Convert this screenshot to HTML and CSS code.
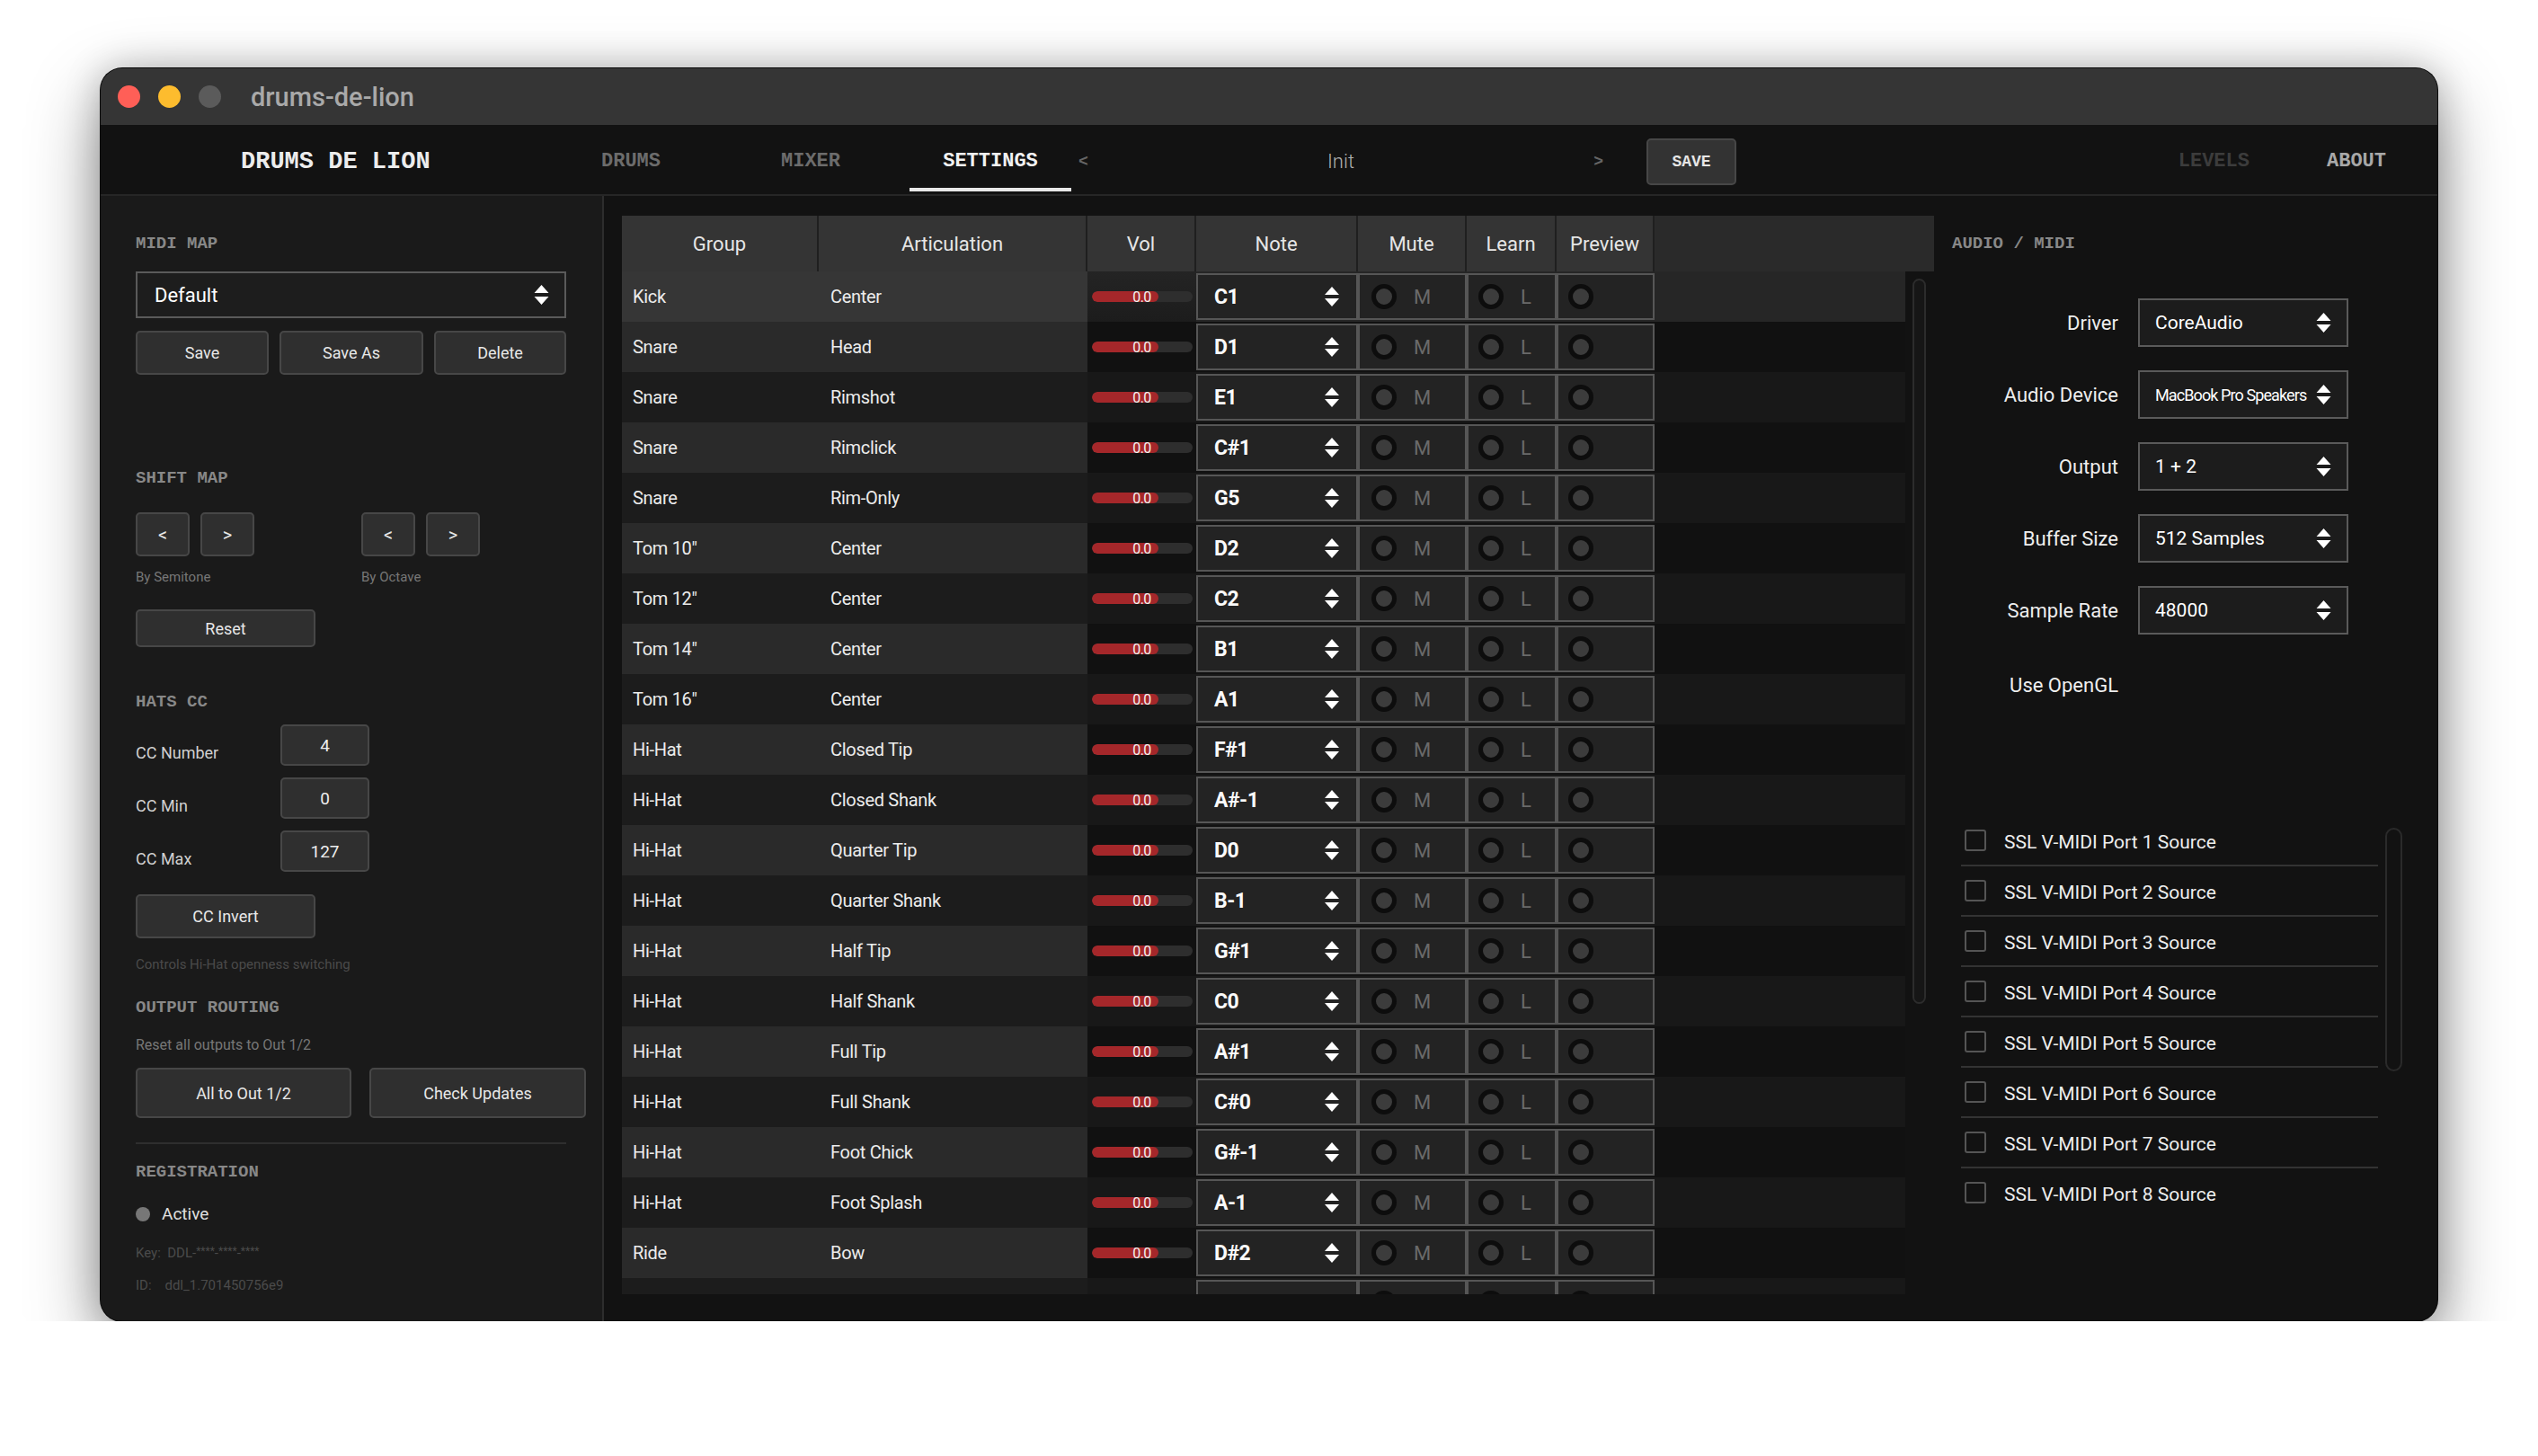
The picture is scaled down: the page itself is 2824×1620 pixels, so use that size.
FILE: index.html
```html
<!DOCTYPE html>
<html lang="en">
<head>
    <meta charset="UTF-8">
    <meta name="viewport" content="width=device-width, initial-scale=1.0">
    <title>drums-de-lion</title>
    <link rel="stylesheet" href="styles.css">
</head>
<body>
<div class="window">
    <div class="titlebar">
        <span class="light red"></span>
        <span class="light yellow"></span>
        <span class="light gray"></span>
        <span class="title">drums-de-lion</span>
    </div>

    <nav class="nav">
        <div class="logo">DRUMS DE LION</div>
        <div class="tabs">
            <div class="tab">DRUMS</div>
            <div class="tab">MIXER</div>
            <div class="tab active">SETTINGS</div>
        </div>
        <div class="preset">
            <span class="preset-arrow">&lt;</span>
            <span class="preset-name">Init</span>
            <span class="preset-arrow">&gt;</span>
        </div>
        <button class="save-btn">SAVE</button>
        <div class="nav-right">
            <span class="nav-link dim">LEVELS</span>
            <span class="nav-link">ABOUT</span>
        </div>
    </nav>

    <div class="main">
        <aside class="sidebar">
            <div class="heading">MIDI MAP</div>
            <div class="select map-select">
                <span>Default</span>
                <svg class="updown" viewBox="0 0 16 24" width="17" height="24"><path d="M8 1 L16 10 H0 Z M8 23 L16 14 H0 Z" fill="#fff"/></svg>
            </div>
            <div class="map-buttons">
                <button class="btn">Save</button>
                <button class="btn">Save As</button>
                <button class="btn">Delete</button>
            </div>

            <div class="heading shift-heading">SHIFT MAP</div>
            <div class="shift">
                <div>
                    <div class="shift-buttons">
                        <button class="btn square">&lt;</button>
                        <button class="btn square">&gt;</button>
                    </div>
                    <div class="caption">By Semitone</div>
                </div>
                <div>
                    <div class="shift-buttons">
                        <button class="btn square">&lt;</button>
                        <button class="btn square">&gt;</button>
                    </div>
                    <div class="caption">By Octave</div>
                </div>
            </div>
            <button class="btn wide reset">Reset</button>

            <div class="heading hats-heading">HATS CC</div>
            <div class="cc-list">
                <div class="cc-row"><span class="cc-label">CC Number</span><span class="cc-box">4</span></div>
                <div class="cc-row"><span class="cc-label">CC Min</span><span class="cc-box">0</span></div>
                <div class="cc-row"><span class="cc-label">CC Max</span><span class="cc-box">127</span></div>
            </div>
            <button class="btn wide invert">CC Invert</button>
            <div class="hint">Controls Hi-Hat openness switching</div>

            <div class="heading routing-heading">OUTPUT ROUTING</div>
            <div class="sub">Reset all outputs to Out 1/2</div>
            <div class="routing-buttons">
                <button class="btn tall">All to Out 1/2</button>
                <button class="btn tall">Check Updates</button>
            </div>
            <div class="divider"></div>

            <div class="heading reg-heading">REGISTRATION</div>
            <div class="status"><span class="dot"></span>Active</div>
            <div class="meta key">Key:  DDL-<sup>****</sup>-<sup>****</sup>-<sup>****</sup></div>
            <div class="meta id">ID:    ddl_1.701450756e9</div>
        </aside>

        <section class="mapping">
            <div class="table-head">
                <div class="th">Group</div>
                <div class="th">Articulation</div>
                <div class="th">Vol</div>
                <div class="th">Note</div>
                <div class="th">Mute</div>
                <div class="th">Learn</div>
                <div class="th">Preview</div>
                <div class="th-rest"></div>
            </div>
            <div class="table-body">
                <div class="rows" id="rows"></div>
                <div class="scroll-col"><div class="thumb"></div></div>
            </div>
        </section>

        <aside class="audio">
            <div class="heading">AUDIO / MIDI</div>
            <div class="audio-form">
                <span class="form-label">Driver</span>
                <div class="select audio-select"><span>CoreAudio</span><svg class="updown" viewBox="0 0 16 24" width="17" height="24"><path d="M8 1 L16 10 H0 Z M8 23 L16 14 H0 Z" fill="#fff"/></svg></div>
                <span class="form-label">Audio Device</span>
                <div class="select audio-select"><span class="narrow">MacBook Pro Speakers</span><svg class="updown" viewBox="0 0 16 24" width="17" height="24"><path d="M8 1 L16 10 H0 Z M8 23 L16 14 H0 Z" fill="#fff"/></svg></div>
                <span class="form-label">Output</span>
                <div class="select audio-select"><span>1 + 2</span><svg class="updown" viewBox="0 0 16 24" width="17" height="24"><path d="M8 1 L16 10 H0 Z M8 23 L16 14 H0 Z" fill="#fff"/></svg></div>
                <span class="form-label">Buffer Size</span>
                <div class="select audio-select"><span>512 Samples</span><svg class="updown" viewBox="0 0 16 24" width="17" height="24"><path d="M8 1 L16 10 H0 Z M8 23 L16 14 H0 Z" fill="#fff"/></svg></div>
                <span class="form-label">Sample Rate</span>
                <div class="select audio-select"><span>48000</span><svg class="updown" viewBox="0 0 16 24" width="17" height="24"><path d="M8 1 L16 10 H0 Z M8 23 L16 14 H0 Z" fill="#fff"/></svg></div>
                <span class="form-label opengl">Use OpenGL</span>
                <span></span>
            </div>

            <div class="ports-wrap">
                <ul class="ports">
                    <li class="port"><span class="check"></span>SSL V-MIDI Port 1 Source</li>
                    <li class="port"><span class="check"></span>SSL V-MIDI Port 2 Source</li>
                    <li class="port"><span class="check"></span>SSL V-MIDI Port 3 Source</li>
                    <li class="port"><span class="check"></span>SSL V-MIDI Port 4 Source</li>
                    <li class="port"><span class="check"></span>SSL V-MIDI Port 5 Source</li>
                    <li class="port"><span class="check"></span>SSL V-MIDI Port 6 Source</li>
                    <li class="port"><span class="check"></span>SSL V-MIDI Port 7 Source</li>
                    <li class="port"><span class="check"></span>SSL V-MIDI Port 8 Source</li>
                </ul>
                <div class="ports-thumb"></div>
            </div>
        </aside>
    </div>
</div>

<script>
    const mapping = [
        ['Kick', 'Center', 'C1'],
        ['Snare', 'Head', 'D1'],
        ['Snare', 'Rimshot', 'E1'],
        ['Snare', 'Rimclick', 'C#1'],
        ['Snare', 'Rim-Only', 'G5'],
        ['Tom 10"', 'Center', 'D2'],
        ['Tom 12"', 'Center', 'C2'],
        ['Tom 14"', 'Center', 'B1'],
        ['Tom 16"', 'Center', 'A1'],
        ['Hi-Hat', 'Closed Tip', 'F#1'],
        ['Hi-Hat', 'Closed Shank', 'A#-1'],
        ['Hi-Hat', 'Quarter Tip', 'D0'],
        ['Hi-Hat', 'Quarter Shank', 'B-1'],
        ['Hi-Hat', 'Half Tip', 'G#1'],
        ['Hi-Hat', 'Half Shank', 'C0'],
        ['Hi-Hat', 'Full Tip', 'A#1'],
        ['Hi-Hat', 'Full Shank', 'C#0'],
        ['Hi-Hat', 'Foot Chick', 'G#-1'],
        ['Hi-Hat', 'Foot Splash', 'A-1'],
        ['Ride', 'Bow', 'D#2'],
        // next row only peeks in at the bottom edge, its labels are scrolled out of view
        ['', '', '']
    ];

    const arrows = '<svg class="updown" viewBox="0 0 16 24" width="16" height="24"><path d="M8 1 L16 10 H0 Z M8 23 L16 14 H0 Z" fill="#fff"/></svg>';
    const rowsEl = document.getElementById('rows');

    mapping.forEach(([group, articulation, note], i) => {
        const peek = note === '';
        const row = document.createElement('div');
        row.className = 'row' + (i % 2 ? ' odd' : '') + (i === 0 ? ' selected' : '');
        row.innerHTML = `
            <div class="cell">${group}</div>
            <div class="cell">${articulation}</div>
            <div class="vol">${peek ? '' : '<div class="slider"><div class="track"><div class="fill"></div></div><span class="vol-value">0.0</span></div>'}</div>
            <div class="box note"><span>${note}</span>${peek ? '' : arrows}</div>
            <div class="box mute"><span class="radio"></span>${peek ? '' : '<span class="flag">M</span>'}</div>
            <div class="box learn"><span class="radio"></span>${peek ? '' : '<span class="flag">L</span>'}</div>
            <div class="box preview"><span class="radio"></span></div>
            <div></div>`;
        rowsEl.appendChild(row);
    });
</script>
</body>
</html>
```

FILE: styles.css
```css
body {
    margin: 0;
    padding: 76px 112px 0;
    background-color: #ffffff;
    font-family: Roboto, 'Liberation Sans', sans-serif;
    color: #e6e6e6;
}
button {
    font-family: Roboto, 'Liberation Sans', sans-serif;
}
.window {
    width: 2600px;
    height: 1394px;
    border-radius: 24px;
    overflow: hidden;
    background-color: #121212;
    box-shadow: 0 0 0 1px #0a0a0a, 0 30px 80px rgba(0, 0, 0, 0.42), 0 0 40px rgba(0, 0, 0, 0.22);
    display: flex;
    flex-direction: column;
}

/* title bar */
.titlebar {
    height: 63px;
    flex: none;
    background-color: #353535;
    display: flex;
    align-items: center;
    gap: 20px;
    padding-left: 19px;
}
.light {
    width: 25px;
    height: 25px;
    border-radius: 50%;
}
.red { background-color: #ff5f57; }
.yellow { background-color: #fdbc2e; }
.gray { background-color: #5b5b5b; }
.title {
    margin-left: 13px;
    font-size: 29px;
    font-weight: 500;
    color: #a9a9a9;
}

/* nav */
.nav {
    height: 79px;
    flex: none;
    box-sizing: border-box;
    background-color: #121212;
    border-bottom: 2px solid #262626;
    display: flex;
    align-items: center;
}
.logo {
    width: 500px;
    box-sizing: border-box;
    padding: 4px 0 0 156px;
    font-family: 'Liberation Mono', monospace;
    font-weight: bold;
    font-size: 27px;
    color: #ececec;
}
.tabs {
    display: flex;
    gap: 20px;
    align-self: stretch;
}
.tab {
    width: 180px;
    box-sizing: border-box;
    display: flex;
    align-items: center;
    justify-content: center;
    padding-top: 11px;
    margin-bottom: 3px;
    border-bottom: 4px solid transparent;
    font-family: 'Liberation Mono', monospace;
    font-weight: bold;
    font-size: 22px;
    color: #6c6c6c;
}
.tab.active {
    color: #f2f2f2;
    border-bottom-color: #e8e8e8;
}
.preset {
    width: 600px;
    box-sizing: border-box;
    padding: 4px 8px 0;
    display: flex;
    justify-content: space-between;
    align-items: center;
}
.preset-arrow {
    font-family: 'Liberation Mono', monospace;
    font-weight: bold;
    font-size: 18px;
    color: #666;
}
.preset-name {
    font-size: 22px;
    font-weight: 300;
    color: #b0b0b0;
}
.save-btn {
    margin: 4px 0 0 40px;
    width: 100px;
    height: 52px;
    background-color: #333;
    border: 2px solid #474747;
    border-radius: 5px;
    color: #e6e6e6;
    font-family: 'Liberation Mono', monospace;
    font-weight: bold;
    font-size: 18px;
}
.nav-right {
    margin-left: auto;
    padding: 4px 57px 0 0;
    display: flex;
    gap: 86px;
}
.nav-link {
    font-family: 'Liberation Mono', monospace;
    font-weight: bold;
    font-size: 22px;
    color: #a8a8a8;
}
.nav-link.dim {
    color: #3c3c3c;
}

/* layout */
.main {
    flex: 1;
    display: flex;
    min-height: 0;
}
.heading {
    font-family: 'Liberation Mono', monospace;
    font-weight: bold;
    font-size: 19px;
    line-height: 22px;
    color: #888;
}

/* left panel */
.sidebar {
    width: 560px;
    flex: none;
    box-sizing: border-box;
    padding: 42px 0 0 39px;
    background-color: #1a1a1a;
    border-right: 2px solid #2d2d2d;
}
.select {
    box-sizing: border-box;
    border: 2px solid #5a5a5a;
    background-color: #1d1d1d;
    display: flex;
    align-items: center;
    justify-content: space-between;
    color: #fff;
}
.map-select {
    margin-top: 20px;
    width: 479px;
    height: 52px;
    padding: 0 17px 0 19px;
    font-size: 22px;
}
.btn {
    display: block;
    box-sizing: border-box;
    background-color: #2f2f2f;
    border: 2px solid #474747;
    border-radius: 5px;
    color: #e8e8e8;
    font-size: 18px;
    padding: 0;
}
.map-buttons {
    margin-top: 14px;
    display: grid;
    grid-template-columns: 148px 160px 147px;
    gap: 12px;
}
.map-buttons .btn {
    height: 49px;
}
.shift-heading {
    margin-top: 104px;
}
.shift {
    margin-top: 27px;
    display: grid;
    grid-template-columns: 251px auto;
}
.shift-buttons {
    display: flex;
    gap: 12px;
}
.btn.square {
    width: 60px;
    height: 49px;
    font-size: 20px;
}
.caption {
    margin-top: 14px;
    font-size: 15px;
    line-height: 18px;
    color: #777;
}
.btn.wide {
    width: 200px;
}
.reset {
    margin-top: 27px;
    height: 42px;
}
.hats-heading {
    margin-top: 50px;
}
.cc-list {
    margin-top: 14px;
    display: flex;
    flex-direction: column;
    gap: 13px;
}
.cc-row {
    display: flex;
    align-items: flex-end;
}
.cc-label {
    width: 161px;
    font-size: 18px;
    line-height: 22px;
    margin-bottom: 3px;
    color: #d0d0d0;
}
.cc-box {
    width: 99px;
    height: 46px;
    box-sizing: border-box;
    background-color: #2f2f2f;
    border: 2px solid #474747;
    border-radius: 5px;
    display: flex;
    align-items: center;
    justify-content: center;
    font-size: 19px;
    color: #eee;
}
.invert {
    margin-top: 25px;
    height: 49px;
}
.hint {
    margin-top: 21px;
    font-size: 15px;
    line-height: 17px;
    color: #4a4a4a;
}
.routing-heading {
    margin-top: 28px;
}
.sub {
    margin-top: 21px;
    font-size: 16px;
    line-height: 20px;
    color: #777;
}
.routing-buttons {
    margin-top: 15px;
    display: grid;
    grid-template-columns: 240px 241px;
    gap: 20px;
}
.btn.tall {
    height: 56px;
}
.divider {
    margin-top: 27px;
    width: 479px;
    height: 2px;
    background-color: #2e2e2e;
}
.reg-heading {
    margin-top: 20px;
}
.status {
    margin-top: 25px;
    display: flex;
    align-items: center;
    gap: 13px;
    font-size: 19px;
    line-height: 22px;
    color: #e0e0e0;
}
.dot {
    width: 16px;
    height: 16px;
    border-radius: 50%;
    background-color: #777;
}
.meta {
    font-size: 15px;
    line-height: 18px;
    color: #4b4b4b;
    white-space: pre;
}
.meta sup {
    font-size: 12px;
    vertical-align: 3px;
}
.key {
    margin-top: 21px;
}
.id {
    margin-top: 18px;
}

/* mapping table */
.mapping {
    flex: 1;
    box-sizing: border-box;
    padding: 22px 0 0 20px;
    display: flex;
    flex-direction: column;
    min-width: 0;
}
.table-head {
    width: 1460px;
    height: 62px;
    flex: none;
    display: grid;
    grid-template-columns: 219px 299px 121px 180px 121px 100px 109px 1fr;
    background-color: #2a2a2a;
}
.th {
    background-color: #343434;
    border-right: 2px solid #1f1f1f;
    display: flex;
    align-items: center;
    justify-content: center;
    font-size: 22px;
    color: #e6e6e6;
}
.table-body {
    width: 1460px;
    height: 1138px;
    overflow: hidden;
    display: flex;
}
.rows {
    width: 1428px;
    flex: none;
}
.row {
    height: 56px;
    display: grid;
    grid-template-columns: 219px 299px 121px 180px 121px 100px 109px 1fr;
    background-color: #181818;
}
.row.odd {
    background-color: #111111;
}
.cell {
    display: flex;
    align-items: center;
    padding-left: 12px;
    background-color: #1c1c1c;
    font-size: 20px;
    letter-spacing: -0.3px;
    color: #ececec;
}
.cell + .cell {
    padding-left: 13px;
}
.row.odd .cell {
    background-color: #2a2a2a;
}
.row.selected {
    background-color: #262626;
}
.row.selected .cell {
    background-color: #363636;
}
.row.selected .vol {
    background: linear-gradient(to bottom, #242424, #1c1c1c);
}
.vol {
    display: flex;
    align-items: center;
    justify-content: center;
}
.slider {
    display: grid;
    align-items: center;
}
.track,
.vol-value {
    grid-area: 1 / 1;
}
.track {
    width: 112px;
    height: 12px;
    border-radius: 6px;
    background-color: #2e2e2e;
    overflow: hidden;
}
.fill {
    width: 74px;
    height: 100%;
    border-radius: 6px;
    background-color: #a5272a;
}
.vol-value {
    justify-self: center;
    font-size: 16px;
    letter-spacing: -0.5px;
    color: #f2f2f2;
}
.box {
    margin: 2px 0;
    box-sizing: border-box;
    border: 2px solid #565656;
    background-color: #232323;
    display: flex;
    align-items: center;
}
.note {
    justify-content: space-between;
    padding: 0 19px 0 18px;
    font-size: 23px;
    font-weight: bold;
    letter-spacing: -0.5px;
    color: #fafafa;
}
.radio {
    width: 28px;
    height: 28px;
    box-sizing: border-box;
    border-radius: 50%;
    border: 5px solid #0d0d0d;
    background-color: #3c3c3c;
    flex: none;
}
.mute .radio {
    margin-left: 13px;
}
.learn .radio,
.preview .radio {
    margin-left: 11px;
}
.flag {
    margin-left: 19px;
    font-size: 22px;
    color: #6a6a6a;
}
.scroll-col {
    width: 32px;
    flex: none;
}
.thumb {
    margin: 8px 0 0 8px;
    width: 15px;
    height: 807px;
    box-sizing: border-box;
    border: 2px solid #2c2c2c;
    border-radius: 8px;
    background-color: #161616;
}

/* right panel */
.audio {
    width: 560px;
    flex: none;
    box-sizing: border-box;
    padding: 42px 0 0 20px;
}
.audio-form {
    margin-top: 50px;
    display: grid;
    grid-template-columns: 185px 234px;
    column-gap: 22px;
    row-gap: 26px;
    align-items: center;
}
.form-label {
    text-align: right;
    font-size: 22px;
    color: #eeeeee;
}
.form-label.opengl {
    height: 54px;
    line-height: 54px;
    margin-top: 4px;
}
.audio-select {
    height: 54px;
    padding: 0 17px 0 17px;
    font-size: 21px;
    background-color: #1c1c1c;
}
.narrow {
    font-size: 18px;
    letter-spacing: -0.9px;
}
.ports-wrap {
    margin-top: 118px;
    margin-left: 10px;
    display: flex;
}
.ports {
    list-style: none;
    margin: 0;
    padding: 0;
    width: 464px;
}
.port {
    height: 56px;
    box-sizing: border-box;
    padding-top: 3px;
    border-bottom: 2px solid #333;
    display: flex;
    align-items: center;
    font-size: 21px;
    color: #eeeeee;
}
.port:last-child {
    border-bottom-color: transparent;
}
.check {
    width: 24px;
    height: 24px;
    box-sizing: border-box;
    margin: 0 20px 4px 4px;
    border: 2px solid #555;
    border-radius: 3px;
}
.ports-thumb {
    margin: 13px 0 0 8px;
    width: 19px;
    height: 271px;
    box-sizing: border-box;
    border: 2px solid #2a2a2a;
    border-radius: 10px;
}
```
